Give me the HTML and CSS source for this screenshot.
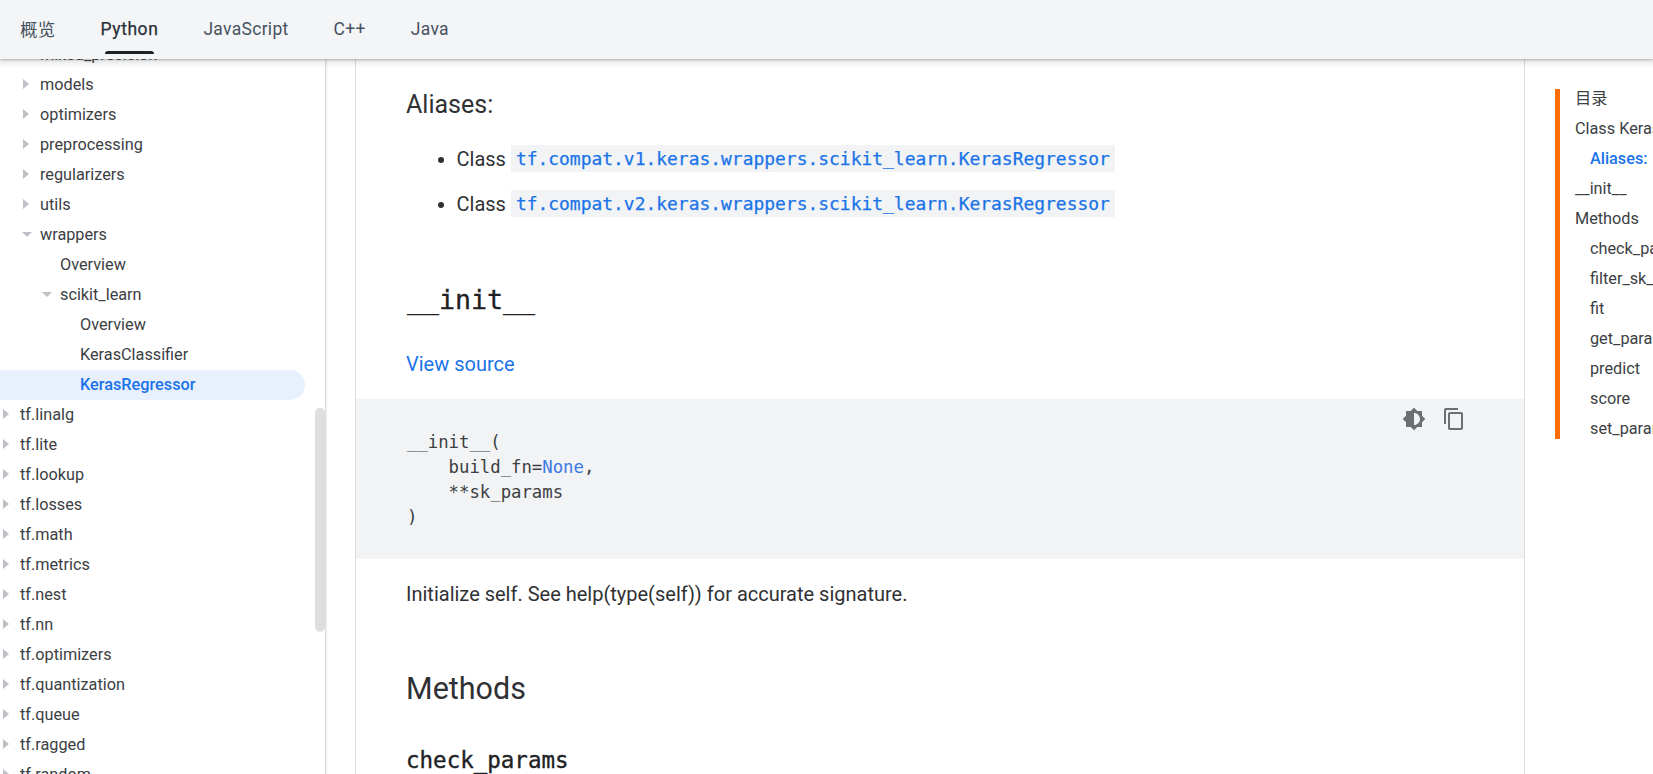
FILE: index.html
```html
<!DOCTYPE html>
<html lang="zh">
<head>
<meta charset="utf-8">
<title>tf.keras.wrappers.scikit_learn.KerasRegressor</title>
<link rel="stylesheet" href="styles.css">
</head>
<body>
<header class="tabs">
  <a class="tab">概览</a>
  <a class="tab tab-active">Python</a>
  <a class="tab">JavaScript</a>
  <a class="tab">C++</a>
  <a class="tab">Java</a>
</header>
<div class="page">
  <nav class="sidebar">
    <ul class="tree">
      <li class="row l1"><span class="arrow right"></span>mixed_precision</li>
      <li class="row l1"><span class="arrow right"></span>models</li>
      <li class="row l1"><span class="arrow right"></span>optimizers</li>
      <li class="row l1"><span class="arrow right"></span>preprocessing</li>
      <li class="row l1"><span class="arrow right"></span>regularizers</li>
      <li class="row l1"><span class="arrow right"></span>utils</li>
      <li class="row l1"><span class="arrow down"></span>wrappers</li>
      <li class="row l2"><span class="arrow"></span>Overview</li>
      <li class="row l2"><span class="arrow down"></span>scikit_learn</li>
      <li class="row l3"><span class="arrow"></span>Overview</li>
      <li class="row l3"><span class="arrow"></span>KerasClassifier</li>
      <li class="row l3 row-active"><span class="arrow"></span>KerasRegressor</li>
      <li class="row l0"><span class="arrow right"></span>tf.linalg</li>
      <li class="row l0"><span class="arrow right"></span>tf.lite</li>
      <li class="row l0"><span class="arrow right"></span>tf.lookup</li>
      <li class="row l0"><span class="arrow right"></span>tf.losses</li>
      <li class="row l0"><span class="arrow right"></span>tf.math</li>
      <li class="row l0"><span class="arrow right"></span>tf.metrics</li>
      <li class="row l0"><span class="arrow right"></span>tf.nest</li>
      <li class="row l0"><span class="arrow right"></span>tf.nn</li>
      <li class="row l0"><span class="arrow right"></span>tf.optimizers</li>
      <li class="row l0"><span class="arrow right"></span>tf.quantization</li>
      <li class="row l0"><span class="arrow right"></span>tf.queue</li>
      <li class="row l0"><span class="arrow right"></span>tf.ragged</li>
      <li class="row l0"><span class="arrow right"></span>tf.random</li>
    </ul>
    <div class="thumb"></div>
  </nav>
  <main class="article">
    <h3 class="aliases">Aliases:</h3>
    <ul class="alias-list">
      <li>Class <code class="inline">tf.compat.v1.keras.wrappers.scikit_learn.KerasRegressor</code></li>
      <li>Class <code class="inline">tf.compat.v2.keras.wrappers.scikit_learn.KerasRegressor</code></li>
    </ul>
    <h2 class="mono-h2">__init__</h2>
    <p class="source"><a class="link">View source</a></p>
    <div class="codeblock">
      <div class="code-actions">
        <svg class="icon" viewBox="0 0 24 24"><path d="M20 15.31L23.31 12 20 8.69V4h-4.69L12 .69 8.69 4H4v4.69L.69 12 4 15.31V20h4.69L12 23.31 15.31 20H20v-4.69zM12 18V6c3.31 0 6 2.69 6 6s-2.69 6-6 6z"/></svg>
        <svg class="icon" viewBox="0 0 24 24"><path d="M16 1H4c-1.1 0-2 .9-2 2v14h2V3h12V1zm3 4H8c-1.1 0-2 .9-2 2v14c0 1.1.9 2 2 2h11c1.1 0 2-.9 2-2V7c0-1.1-.9-2-2-2zm0 16H8V7h11v14z"/></svg>
      </div>
<pre class="code">__init__(
    build_fn=<span class="kw">None</span>,
    **sk_params
)</pre>
    </div>
    <p class="desc">Initialize self. See help(type(self)) for accurate signature.</p>
    <h2 class="methods">Methods</h2>
    <h3 class="mono-h3">check_params</h3>
  </main>
  <aside class="toc">
    <div class="toc-item">目录</div>
    <div class="toc-item">Class KerasRegressor</div>
    <div class="toc-item sub toc-active">Aliases:</div>
    <div class="toc-item">__init__</div>
    <div class="toc-item">Methods</div>
    <div class="toc-item sub">check_params</div>
    <div class="toc-item sub">filter_sk_params</div>
    <div class="toc-item sub">fit</div>
    <div class="toc-item sub">get_params</div>
    <div class="toc-item sub">predict</div>
    <div class="toc-item sub">score</div>
    <div class="toc-item sub">set_params</div>
  </aside>
</div>
</body>
</html>
```
FILE: styles.css
```css
* { box-sizing: border-box; }
html, body { margin: 0; padding: 0; height: 100%; overflow: hidden; background: #fff; }
body { font-family: Roboto, "Noto Sans CJK SC", sans-serif; color: #303134; }

.tabs {
  position: relative;
  z-index: 2;
  display: flex;
  align-items: center;
  gap: 45px;
  height: 59px;
  padding: 0 0 2px 20px;
  background: #f3f5f7;
  box-shadow: 0 1px 2px rgba(60,64,67,.3), 0 2px 6px 2px rgba(60,64,67,.15);
  font-family: Roboto, "Noto Sans CJK SC", sans-serif;
  font-size: 17.5px;
  letter-spacing: .3px;
  color: #47525f;
}
.tab { position: relative; white-space: nowrap; }
.tab-active { color: #2b3038; letter-spacing: .55px; -webkit-text-stroke: .25px #2b3038; }
.tab-active::after {
  content: "";
  position: absolute;
  left: 4px;
  right: 4px;
  top: 32px;
  height: 3px;
  border-radius: 3px 3px 0 0;
  background: #202124;
}

.page { display: flex; height: 715px; overflow: hidden; }

.sidebar {
  position: relative;
  flex: none;
  width: 326px;
  height: 100%;
  overflow: hidden;
  border-right: 1px solid #dadce0;
  box-shadow: 1px 0 1px rgba(60,64,67,.08);
}
.tree {
  list-style: none;
  margin: -19px 20px 0 0;
  padding: 0;
  font-size: 16.25px;
  color: #3c4043;
}
.row { display: flex; align-items: center; height: 30px; padding-bottom: 2px; white-space: nowrap; }
.l0 { padding-left: 0; }
.l1 { padding-left: 20px; }
.l2 { padding-left: 40px; }
.l3 { padding-left: 60px; }
.row-active {
  background: #e8f0fe;
  border-radius: 0 15px 15px 0;
  color: #1a73e8;
  font-weight: 500;
}
.arrow { position: relative; flex: none; width: 20px; height: 28px; }
.arrow.right::before {
  content: "";
  position: absolute;
  left: 3px;
  top: 9px;
  border-style: solid;
  border-width: 5px 0 5px 6px;
  border-color: transparent transparent transparent #bdc1c6;
}
.arrow.down::before {
  content: "";
  position: absolute;
  left: 2px;
  top: 12px;
  border-style: solid;
  border-width: 5px 5px 0 5px;
  border-color: #bdc1c6 transparent transparent transparent;
}
.thumb {
  position: absolute;
  left: 315px;
  top: 349px;
  width: 10px;
  height: 224px;
  border-radius: 5px;
  background: #dcdee0;
}

.article {
  flex: none;
  width: 1170px;
  height: 100%;
  margin-left: 29px;
  padding-top: 31px;
  overflow: hidden;
  border-left: 1px solid #dadce0;
  border-right: 1px solid #dadce0;
}
.aliases, .alias-list, .mono-h2, .source, .desc, .methods, .mono-h3 { margin-left: 50px; margin-right: 50px; }
.aliases { margin-top: 0; margin-bottom: 0; font-size: 25px; font-weight: 400; line-height: 30px; }
.alias-list { margin-top: 24px; margin-bottom: 0; padding-left: 50.5px; font-size: 20px; line-height: 30px; }
.alias-list li + li { margin-top: 15px; }
.inline {
  padding: 3px 5px;
  background: #f1f3f4;
  font-family: "DejaVu Sans Mono", monospace;
  font-size: 17.96px;
  line-height: 1;
  vertical-align: 1px;
  -webkit-text-stroke: .25px #1a73e8;
  color: #1a73e8;
}
.mono-h2 {
  margin-top: 61px;
  margin-bottom: 0;
  margin-left: 51px;
  font-family: "DejaVu Sans Mono", monospace;
  font-size: 26.6px;
  font-weight: 400;
  line-height: 40px;
  color: #202124;
  -webkit-text-stroke: .3px #202124;
}
.source { margin-top: 29px; margin-bottom: 0; font-size: 20px; line-height: 30px; }
.link { color: #1a73e8; }
.codeblock {
  position: relative;
  margin-top: 20px;
  padding: 31px 51px 29px;
  height: 160px;
  background: #f1f3f4;
}
.code-actions {
  position: absolute;
  top: 8px;
  left: 1046px;
  display: flex;
  gap: 16px;
}
.icon { display: block; width: 24px; height: 24px; fill: #6b6e72; }
.code {
  margin: 0;
  font-family: "DejaVu Sans Mono", monospace;
  font-size: 17.3px;
  line-height: 25px;
  color: #3c4043;
}
.kw { color: #3b78e7; }
.desc { margin-top: 20px; margin-bottom: 0; font-size: 20px; line-height: 30px; }
.methods { margin-top: 60px; margin-bottom: 0; font-size: 30.5px; font-weight: 400; line-height: 40px; }
.mono-h3 {
  margin-top: 36px;
  margin-bottom: 0;
  font-family: "DejaVu Sans Mono", monospace;
  font-size: 22.5px;
  font-weight: 400;
  line-height: 30px;
  color: #202124;
  -webkit-text-stroke: .35px #202124;
}

.toc {
  flex: none;
  align-self: flex-start;
  width: 300px;
  height: 350px;
  margin: 30px 0 0 30px;
  padding-left: 15px;
  border-left: 5px solid #ff6d00;
  font-size: 16.25px;
  color: #3c4043;
}
.toc-item { height: 30px; line-height: 20px; white-space: nowrap; }
.sub { padding-left: 15px; }
.toc-active { color: #1a73e8; font-weight: 500; }
```
